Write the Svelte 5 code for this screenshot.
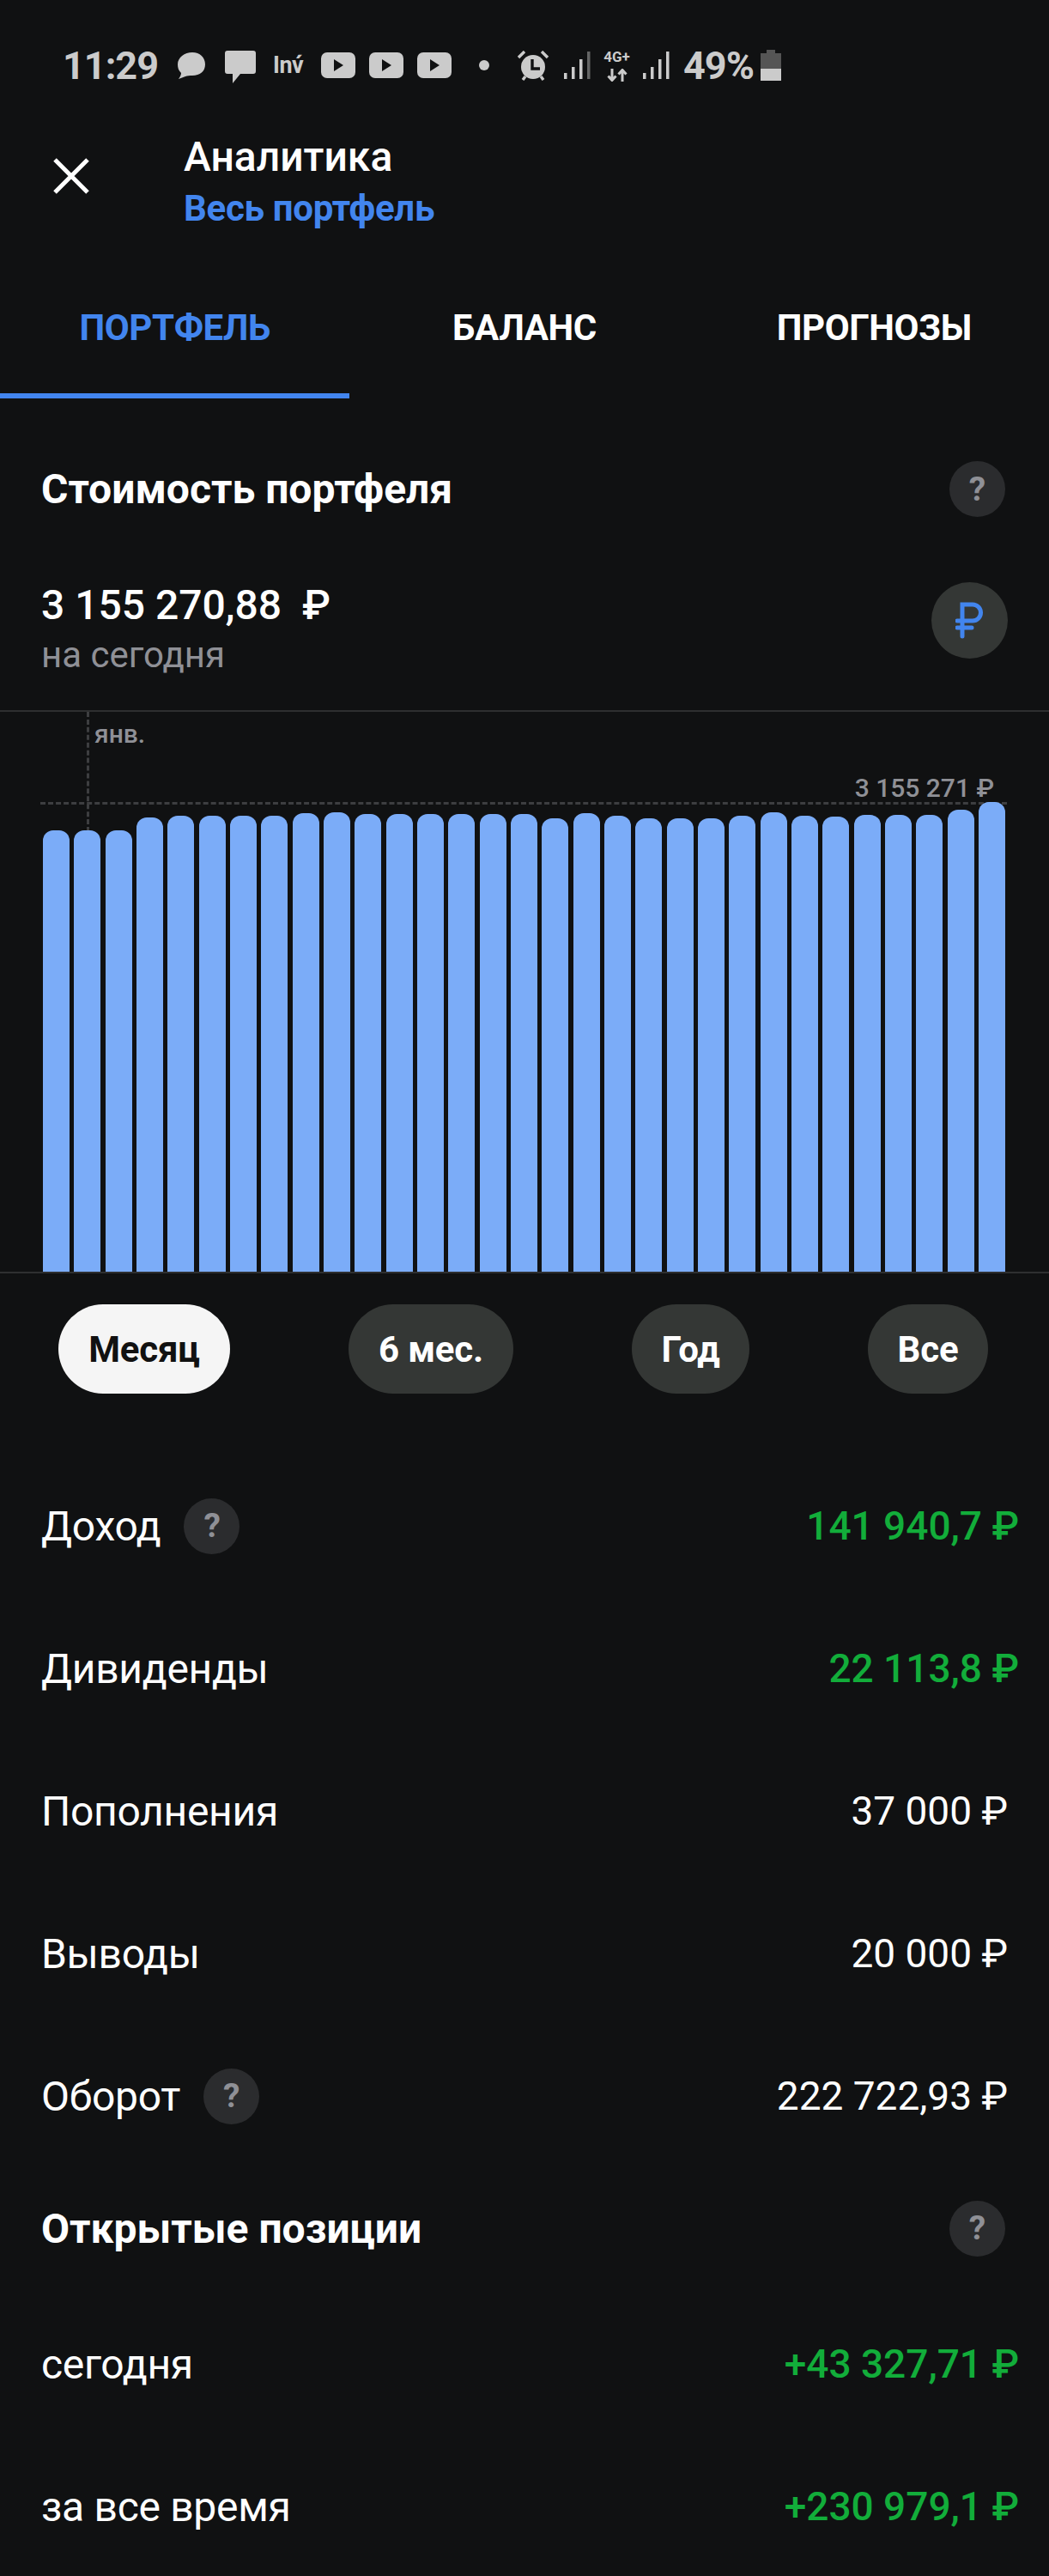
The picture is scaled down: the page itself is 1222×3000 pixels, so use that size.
<script>
  const tops = [967,967,967,952,950,950,950,950,947,946,948,948,948,948,948,948,953,947,950,953,953,953,950,946,950,951,949,949,949,943,934];
  const base = 1481;
  const bars = tops.map((t) => base - t);
  const tabs = ['ПОРТФЕЛЬ', 'БАЛАНС', 'ПРОГНОЗЫ'];
  const pills = [
    { label: 'Месяц', w: 200, active: true },
    { label: '6 мес.', w: 192 },
    { label: 'Год', w: 137 },
    { label: 'Все', w: 140 }
  ];
</script>

{#snippet help()}
  <span class="help">?</span>
{/snippet}

{#snippet yt()}
  <svg class="yt" viewBox="0 0 40 30"><rect width="40" height="30" rx="7" fill="#cbcbcb" /><path d="M15 8l11 7-11 7z" fill="#101112" /></svg>
{/snippet}

{#snippet signal(a)}
  <svg class="signal" viewBox="0 0 31 32">
    <g fill="#cbcbcb">
      <rect x="0" y="25" width="3.5" height="7" />
      <rect x="9" y="18" width="3.5" height="14" />
      <rect x="18" y="9" width="3.5" height="23" />
      <rect x="27" y="0" width="3.5" height="32" opacity={a} />
    </g>
  </svg>
{/snippet}

<div class="page">
  <div class="status">
    <span class="time">11:29</span>
    <svg class="bubble" viewBox="0 0 34 32"><path d="M18 1c9 0 15 6 15 14s-6 13-15 13c-3 0-6 0-8 1l-8 3c2-3 3-5 3-7C2 22 1 19 1 15 1 7 9 1 18 1z" fill="#cbcbcb" /></svg>
    <svg class="chat" viewBox="0 0 36 38"><path d="M3 0h30a3 3 0 0 1 3 3v21a3 3 0 0 1-3 3H18L9 38v-11H3a3 3 0 0 1-3-3V3a3 3 0 0 1 3-3z" fill="#cbcbcb" /></svg>
    <span class="inv">Inv́</span>
    <div class="yts">{@render yt()}{@render yt()}{@render yt()}</div>
    <span class="dot"></span>
    <svg class="alarm" viewBox="0 0 38 35">
      <circle cx="19" cy="19" r="14" fill="#cbcbcb" />
      <path d="M18 10v11h9" fill="none" stroke="#101112" stroke-width="3.4" />
      <path d="M2 8l7-7M36 8l-7-7M7 34l3-4M31 34l-3-4" stroke="#cbcbcb" stroke-width="3.4" fill="none" />
    </svg>
    {@render signal(0.45)}
    <div class="net">
      <span class="g">4G+</span>
      <svg viewBox="0 0 24 15"><path d="M6 0v13M1.5 8.5L6 13.5l4.5-5M18 15V2M13.5 6.5L18 1.5l4.5 5" fill="none" stroke="#cbcbcb" stroke-width="3" /></svg>
    </div>
    {@render signal(1)}
    <span class="pct">49%</span>
    <div class="battery"><span class="cap"></span><span class="empty"></span><span class="full"></span></div>
  </div>

  <header class="head">
    <svg class="close" viewBox="0 0 42 42"><path d="M2 2l38 38M40 2L2 40" stroke="#fff" stroke-width="5" fill="none" /></svg>
    <div class="titles">
      <div class="title">Аналитика</div>
      <div class="sub">Весь портфель</div>
    </div>
  </header>

  <nav class="tabs">
    {#each tabs as t, i}
      <div class="tab" class:on={i === 0}>{t}</div>
    {/each}
  </nav>

  <div class="heading sec1"><span>Стоимость портфеля</span>{@render help()}</div>

  <div class="value">
    <div class="sum">
      <div class="amount">3 155 270,88 &nbsp;₽</div>
      <div class="today">на сегодня</div>
    </div>
    <div class="rub">
      <svg viewBox="0 0 34 44"><path d="M8 40V3h12a9.5 9.5 0 0 1 0 19H2M2 30h17" fill="none" stroke="#4285ee" stroke-width="5" stroke-linecap="round" /></svg>
    </div>
  </div>

  <div class="chart">
    <div class="vline"></div>
    <div class="hline"></div>
    <span class="jan">янв.</span>
    <span class="max">3 155 271 ₽</span>
    <div class="bars">
      {#each bars as h}
        <div class="bar" style="height:{h}px"></div>
      {/each}
    </div>
  </div>

  <div class="pills">
    {#each pills as p}
      <div class="pill" class:active={p.active} style="width:{p.w}px">{p.label}</div>
    {/each}
  </div>

  <div class="rows">
    <div class="row"><div class="lab">Доход {@render help()}</div><div class="val green">141 940,7 ₽</div></div>
    <div class="row"><div class="lab">Дивиденды</div><div class="val green">22 113,8 ₽</div></div>
    <div class="row"><div class="lab">Пополнения</div><div class="val">37 000 ₽</div></div>
    <div class="row"><div class="lab">Выводы</div><div class="val">20 000 ₽</div></div>
    <div class="row"><div class="lab">Оборот {@render help()}</div><div class="val">222 722,93 ₽</div></div>
  </div>

  <div class="heading sec2"><span>Открытые позиции</span>{@render help()}</div>

  <div class="rows">
    <div class="row"><div class="lab">сегодня</div><div class="val green">+43 327,71 ₽</div></div>
    <div class="row"><div class="lab">за все время</div><div class="val green">+230 979,1 ₽</div></div>
  </div>
</div>

<style>
  :global(body) { margin: 0; background: #101112; }
  .page {
    width: 1222px; height: 3000px; overflow: hidden; background: #101112; color: #fff;
    font-family: Roboto, "Liberation Sans", sans-serif;
  }
  .status { height: 150px; display: flex; align-items: center; padding: 2px 0 0 73px; box-sizing: border-box; color: #cbcbcb; }
  .time { font-size: 45px; font-weight: 700; letter-spacing: -1px; width: 133px; }
  .bubble { width: 34px; height: 32px; margin-right: 22px; }
  .chat { width: 36px; height: 38px; margin-right: 20px; margin-top: 4px; }
  .inv { font-size: 27px; font-weight: 700; letter-spacing: -0.5px; width: 56px; }
  .yts { display: flex; gap: 16px; width: 184px; }
  .yt { width: 40px; height: 30px; flex: none; }
  .dot { width: 12px; height: 12px; border-radius: 50%; background: #cbcbcb; margin-right: 32px; }
  .alarm { width: 38px; height: 35px; margin-right: 17px; }
  .signal { width: 31px; height: 32px; margin-right: 12px; flex: none; }
  .net { width: 37px; margin-right: 12px; display: flex; flex-direction: column; align-items: center; }
  .g { font-size: 17px; font-weight: 700; line-height: 17px; }
  .net svg { width: 24px; height: 15px; margin-top: 5px; }
  .pct { font-size: 45px; font-weight: 700; letter-spacing: -1px; margin-left: 4px; width: 90px; }
  .battery { width: 24px; display: flex; flex-direction: column; align-items: center; }
  .cap { width: 10px; height: 4px; background: #555; }
  .empty { width: 24px; height: 18px; background: #555; }
  .full { width: 24px; height: 14px; background: #cbcbcb; }

  .head { height: 110px; display: flex; align-items: center; padding-left: 62px; }
  .close { width: 42px; height: 42px; flex: none; margin-right: 110px; }
  .titles { margin-top: 15px; }
  .title { font-size: 48px; font-weight: 500; line-height: 60px; }
  .sub { font-size: 42px; font-weight: 700; letter-spacing: -0.3px; line-height: 60px; color: #4285ee; }

  .tabs { display: flex; height: 204px; }
  .tab { width: 407.33px; height: 204px; box-sizing: border-box; padding-top: 92px; text-align: center; font-size: 42px; font-weight: 700; letter-spacing: -0.4px; line-height: 60px; }
  .tab.on { color: #4285ee; border-bottom: 6px solid #4285ee; }

  .heading { display: flex; justify-content: space-between; align-items: center; font-size: 48px; font-weight: 700; padding: 0 51px 0 48px; box-sizing: border-box; }
  .sec1 { height: 214px; padding-bottom: 3px; }
  .sec2 { height: 146px; padding-bottom: 4px; }
  .help { display: inline-flex; width: 65px; height: 65px; border-radius: 50%; background: #2b2c2e; color: #8f9096; font-size: 39px; font-weight: 700; align-items: center; justify-content: center; margin-left: 14px; flex: none; }
  .lab .help { margin-left: 27px; }

  .value { display: flex; justify-content: space-between; align-items: flex-start; padding: 0 48px; height: 149px; }
  .sum { margin-top: -3px; }
  .amount { font-size: 48px; font-weight: 500; line-height: 60px; }
  .today { font-size: 42px; color: #8f9096; line-height: 56px; }
  .rub { width: 89px; height: 89px; border-radius: 50%; background: #343735; display: flex; align-items: center; justify-content: center; }
  .rub svg { width: 34px; height: 44px; }

  .chart { position: relative; height: 656px; border-top: 2px solid #2e2f30; border-bottom: 2px solid #2e2f30; box-sizing: border-box; }
  .vline { position: absolute; left: 101px; top: 0; height: 140px; border-left: 3px dashed #3d3e40; }
  .hline { position: absolute; left: 47px; right: 49px; top: 105px; border-top: 3px dashed #3d3e40; }
  .jan { position: absolute; left: 110px; top: 8px; font-size: 30px; font-weight: 500; color: #8f9096; line-height: 36px; }
  .max { position: absolute; right: 64px; top: 71px; font-size: 30px; font-weight: 500; color: #8f9096; line-height: 36px; }
  .bars { position: absolute; left: 50px; bottom: 0; display: flex; align-items: flex-end; gap: 5.33px; }
  .bar { width: 31px; background: #7bacf8; border-radius: 12px 12px 0 0; flex: none; }

  .pills { display: flex; height: 104px; margin: 36px 0 71px; padding-left: 68px; gap: 138px; }
  .pill { border-radius: 52px; background: #343735; display: flex; align-items: center; justify-content: center; font-size: 42px; font-weight: 700; letter-spacing: -0.2px; flex: none; }
  .pill.active { background: #f5f5f5; color: #111; }

  .rows { display: flex; flex-direction: column; }
  .row { height: 166px; flex: none; display: flex; justify-content: space-between; align-items: center; padding: 0 48px; }
  .lab { font-size: 48px; letter-spacing: -0.3px; display: flex; align-items: center; }
  .val { font-size: 46px; }
  .val.green { color: #12ad3a; font-weight: 500; margin-right: -13px; }
</style>
